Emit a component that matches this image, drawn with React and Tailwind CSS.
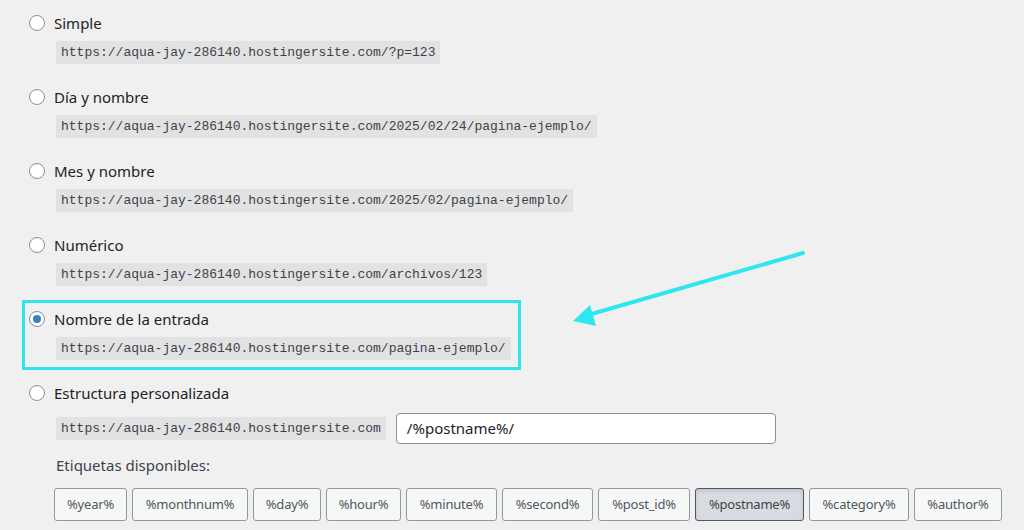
import React from "react";

const BASE = "https://aqua-jay-286140.hostingersite.com";

const options = [
  { label: "Simple", url: `${BASE}/?p=123` },
  { label: "Día y nombre", url: `${BASE}/2025/02/24/pagina-ejemplo/` },
  { label: "Mes y nombre", url: `${BASE}/2025/02/pagina-ejemplo/` },
  { label: "Numérico", url: `${BASE}/archivos/123` },
  { label: "Nombre de la entrada", url: `${BASE}/pagina-ejemplo/`, checked: true },
];

// widths taken from the reference buttons
const tags = [
  { t: "%year%", w: "w-[73px]" },
  { t: "%monthnum%", w: "w-[116px]" },
  { t: "%day%", w: "w-[68px]" },
  { t: "%hour%", w: "w-[75px]" },
  { t: "%minute%", w: "w-[91px]" },
  { t: "%second%", w: "w-[91px]" },
  { t: "%post_id%", w: "w-[92px]" },
  { t: "%postname%", w: "w-[109px]" },
  { t: "%category%", w: "w-[100px]" },
  { t: "%author%", w: "w-[88px]" },
];

function Radio({ checked }) {
  return (
    <span className="flex h-4 w-4 shrink-0 items-center justify-center rounded-full border border-[#8c8f94] bg-white">
      {checked && <span className="h-2 w-2 rounded-full bg-[#3582c4]" />}
    </span>
  );
}

function Code({ children }) {
  return (
    <code className="bg-[#e2e2e3] px-[5px] py-[2px] font-['Liberation_Mono',monospace] text-[13px] leading-[19px] text-[#3c434a]">
      {children}
    </code>
  );
}

export default function App() {
  return (
    <div className="relative h-[530px] w-[1024px] overflow-hidden bg-[#f0f0f1] font-['Noto_Sans',sans-serif] text-[#1d2327]">
      <div className="flex flex-col gap-[4px] pl-[22px] pt-[4px]">
        {options.map((opt) => (
          <div
            key={opt.label}
            className={`w-fit border-[3px] pb-[7px] pl-[4px] pr-[7px] pt-[4px] ${
              opt.checked ? "border-[#2fe6ef]" : "border-transparent"
            }`}
          >
            <div className="flex h-[24px] items-center gap-[9px]">
              <Radio checked={opt.checked} />
              <span className="text-[15px]">{opt.label}</span>
            </div>
            <div className="mt-[6px] flex pl-[27px]">
              <Code>{opt.url}</Code>
            </div>
          </div>
        ))}

        {/* Estructura personalizada */}
        <div className="border-[3px] border-transparent pl-[4px] pt-[4px]">
          <div className="flex h-[24px] items-center gap-[9px]">
            <Radio />
            <span className="text-[15px]">Estructura personalizada</span>
          </div>
          <div className="mt-[8px] flex items-center gap-[10px] pl-[27px]">
            <Code>{BASE}</Code>
            <div className="flex h-[31px] w-[380px] items-center rounded-[4px] border border-[#8c8f94] bg-white px-[10px] text-[15px]">
              /%postname%/
            </div>
          </div>
          <div className="mt-[9px] pl-[27px] text-[15px] leading-[24px] text-[#3c434a]">
            Etiquetas disponibles:
          </div>
          <div className="mt-[11px] flex gap-[5px] pl-[25px]">
            {tags.map(({ t, w }) => (
              <span
                key={t}
                className={`flex h-[33px] ${w} items-center justify-center rounded-[3px] border text-[13px] tracking-[-0.2px] ${
                  t === "%postname%"
                    ? "border-[#50575e] bg-[#d8dce0] text-[#3c434a] shadow-[inset_0_2px_4px_rgba(0,0,0,0.12)]"
                    : "border-[#8c9aa5] bg-[#f6f7f7] text-[#50575e]"
                }`}
              >
                {t}
              </span>
            ))}
          </div>
        </div>
      </div>

      {/* arrow pointing at the selected option */}
      <svg
        className="pointer-events-none absolute left-0 top-0"
        width="1024"
        height="530"
        viewBox="0 0 1024 530"
      >
        <line x1="803" y1="253" x2="588" y2="315" stroke="#2fe6ef" strokeWidth="4" strokeLinecap="round" />
        <polygon points="573,321 590,305 596,326" fill="#2fe6ef" />
      </svg>
    </div>
  );
}
